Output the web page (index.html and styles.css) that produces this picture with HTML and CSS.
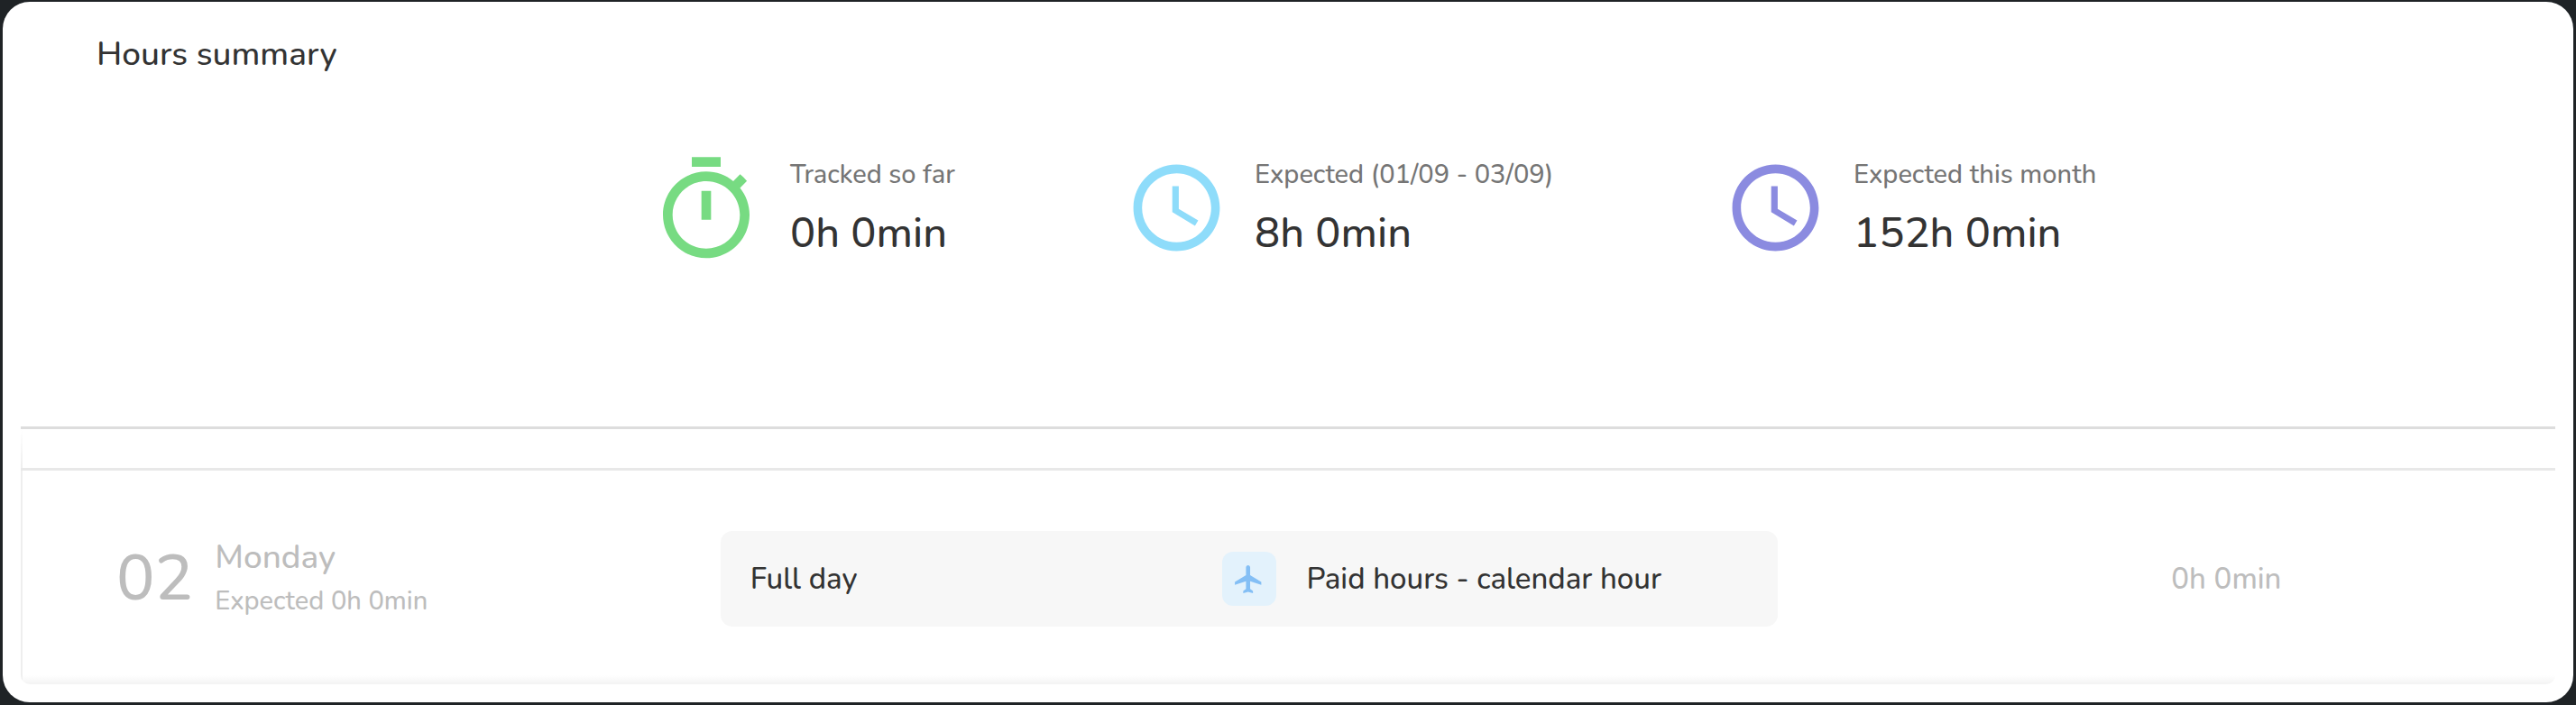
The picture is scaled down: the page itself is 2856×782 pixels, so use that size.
FILE: index.html
```html
<!DOCTYPE html>
<html lang="en">
<head>
    <meta charset="UTF-8">
    <meta name="viewport" content="width=device-width, initial-scale=1.0">
    <title>Hours summary</title>
    <link rel="stylesheet" href="styles.css">
</head>
<body>
    <main class="card">
        <section class="summary">
            <h1>Hours summary</h1>
            <div class="stats">
                <div class="stat">
                    <svg class="icon-timer" viewBox="0 0 24 24" aria-hidden="true">
                        <path d="M15 1H9v2h6V1zm-4 13h2V8h-2v6zm8.03-6.61l1.42-1.42c-.43-.51-.9-.99-1.41-1.41l-1.42 1.42C16.07 4.74 14.12 4 12 4c-4.97 0-9 4.03-9 9s4.02 9 9 9 9-4.03 9-9c0-2.12-.74-4.07-1.97-5.61zM12 20c-3.87 0-7-3.13-7-7s3.13-7 7-7 7 3.13 7 7-3.13 7-7 7z"/>
                    </svg>
                    <div class="stat-text">
                        <div class="label">Tracked so far</div>
                        <div class="value">0h 0min</div>
                    </div>
                </div>
                <div class="stat">
                    <svg class="icon-clock blue" viewBox="0 0 24 24" aria-hidden="true">
                        <path d="M11.99 2C6.47 2 2 6.48 2 12s4.47 10 9.99 10C17.52 22 22 17.52 22 12S17.52 2 11.99 2zM12 20c-4.42 0-8-3.58-8-8s3.58-8 8-8 8 3.58 8 8-3.58 8-8 8zm.5-13H11v6l5.25 3.15.75-1.23-4.5-2.67z"/>
                    </svg>
                    <div class="stat-text">
                        <div class="label">Expected (01/09 - 03/09)</div>
                        <div class="value">8h 0min</div>
                    </div>
                </div>
                <div class="stat">
                    <svg class="icon-clock purple" viewBox="0 0 24 24" aria-hidden="true">
                        <path d="M11.99 2C6.47 2 2 6.48 2 12s4.47 10 9.99 10C17.52 22 22 17.52 22 12S17.52 2 11.99 2zM12 20c-4.42 0-8-3.58-8-8s3.58-8 8-8 8 3.58 8 8-3.58 8-8 8zm.5-13H11v6l5.25 3.15.75-1.23-4.5-2.67z"/>
                    </svg>
                    <div class="stat-text">
                        <div class="label">Expected this month</div>
                        <div class="value">152h 0min</div>
                    </div>
                </div>
            </div>
        </section>

        <section class="days">
            <div class="day">
                <div class="date">
                    <div class="number">02</div>
                    <div>
                        <div class="weekday">Monday</div>
                        <div class="expected">Expected 0h 0min</div>
                    </div>
                </div>
                <div class="entry">
                    <span>Full day</span>
                    <div class="entry-type">
                        <span class="badge">
                            <svg viewBox="0 0 24 24" aria-hidden="true">
                                <path d="M21 16v-2l-8-5V3.5c0-.83-.67-1.5-1.5-1.5S10 2.67 10 3.5V9l-8 5v2l8-2.5V19l-2 1.5V22l3.5-1 3.5 1v-1.5L13 19v-5.5l8 2.5z"/>
                            </svg>
                        </span>
                        <span>Paid hours - calendar hour</span>
                    </div>
                </div>
                <div class="total">0h 0min</div>
            </div>
        </section>
    </main>
</body>
</html>
```

FILE: styles.css
```css
* {
    box-sizing: border-box;
}

body {
    margin: 0;
    padding: 2px 3px 3px;
    min-height: 100vh;
    display: flex;
    background: #1f2326;
    font-family: 'Nunito', 'Open Sans', 'Noto Sans', sans-serif;
    font-weight: 500;
    color: #333;
}

.card {
    flex: 1;
    padding: 0 20px 20px;
    background: #fff;
    border-radius: 30px;
}

.summary {
    padding: 34px 0 176px;
    border-bottom: 3px solid #ddd;
}

h1 {
    margin: 0 0 0 84px;
    font-size: 37px;
    font-weight: 500;
    line-height: 48px;
}

.stats {
    display: grid;
    grid-template-columns: 528fr 664fr 922fr;
    margin-top: 82px;
    padding-left: 696px;
}

.stat {
    display: flex;
    gap: 29px;
    height: 131px;
}

.stat svg {
    flex: none;
}

.icon-timer {
    width: 128px;
    height: 128px;
    margin-top: 3px;
    fill: #77db82;
}

.icon-clock {
    width: 115px;
    height: 115px;
    margin-top: 7px;
}

.blue {
    fill: #8edcfa;
}

.purple {
    fill: #8b8be0;
}

.label {
    margin-top: 8px;
    font-size: 29px;
    line-height: 40px;
    color: #757575;
}

.value {
    margin-top: 17px;
    font-size: 47px;
    line-height: 56px;
}

.days {
    padding-top: 43px;
    background: linear-gradient(to bottom, #fff, #eee 43px) left / 2px 100% no-repeat;
    border-radius: 0 0 10px 10px;
}

.day {
    display: grid;
    grid-template-columns: 776fr 1173fr 862fr;
    align-items: center;
    padding: 67px 0 64px;
    border-top: 3px solid #e8e8e8;
    border-radius: 0 0 10px 10px;
    background: linear-gradient(to top, #f3f3f3, rgba(255, 255, 255, 0) 10px);
}

.date {
    display: flex;
    align-items: center;
    gap: 24px;
    padding-left: 106px;
    color: #bdbdbd;
}

.number {
    font-size: 71px;
    line-height: 80px;
}

.weekday {
    font-size: 37px;
    line-height: 50px;
}

.expected {
    font-size: 29px;
    line-height: 48px;
}

.entry {
    display: grid;
    grid-template-columns: 523fr 617fr;
    align-items: center;
    height: 106px;
    padding-left: 33px;
    background: #f7f7f7;
    border-radius: 13px;
    font-size: 33px;
}

.entry-type {
    display: flex;
    align-items: center;
    gap: 34px;
    white-space: nowrap;
}

.badge {
    display: flex;
    align-items: center;
    justify-content: center;
    width: 60px;
    height: 60px;
    background: #e3f2fc;
    border-radius: 12px;
}

.badge svg {
    width: 37px;
    height: 37px;
    fill: #84bff5;
}

.total {
    padding-left: 436px;
    font-size: 33px;
    color: #bdbdbd;
}
```
